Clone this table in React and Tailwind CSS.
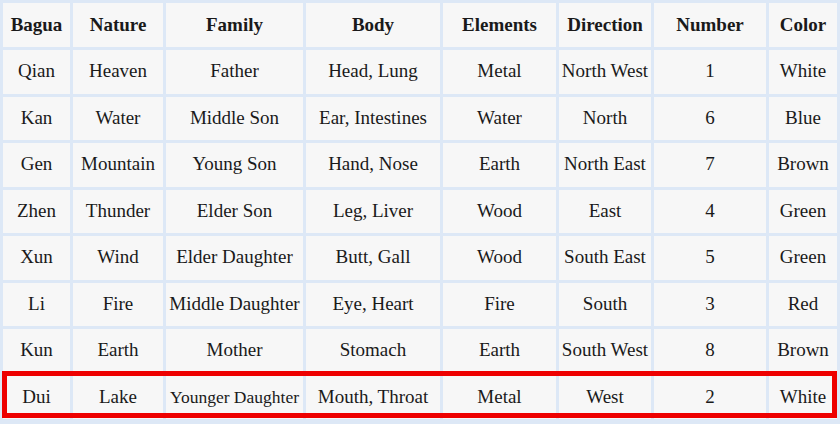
const headers = ["Bagua", "Nature", "Family", "Body", "Elements", "Direction", "Number", "Color"];

const rows = [
  ["Qian", "Heaven", "Father", "Head, Lung", "Metal", "North West", "1", "White"],
  ["Kan", "Water", "Middle Son", "Ear, Intestines", "Water", "North", "6", "Blue"],
  ["Gen", "Mountain", "Young Son", "Hand, Nose", "Earth", "North East", "7", "Brown"],
  ["Zhen", "Thunder", "Elder Son", "Leg, Liver", "Wood", "East", "4", "Green"],
  ["Xun", "Wind", "Elder Daughter", "Butt, Gall", "Wood", "South East", "5", "Green"],
  ["Li", "Fire", "Middle Daughter", "Eye, Heart", "Fire", "South", "3", "Red"],
  ["Kun", "Earth", "Mother", "Stomach", "Earth", "South West", "8", "Brown"],
  ["Dui", "Lake", "Younger Daughter", "Mouth, Throat", "Metal", "West", "2", "White"],
];

export default function App() {
  return (
    <div className="relative w-[840px] h-[424px] bg-[#dde8f6] font-['Liberation_Serif',serif] text-[#1a1a1a]">
      <div className="grid grid-cols-[67px_90px_137px_134px_113px_92px_112px_68px] grid-rows-[44px_repeat(8,43.5px)] gap-[3px] p-[3px]">
        {headers.map((h) => (
          <div key={h} className="flex items-center justify-center bg-[#f7f7f7] text-[19px] font-bold">
            {h}
          </div>
        ))}
        {rows.map((r) =>
          r.map((c, i) => (
            <div
              key={r[0] + i}
              className={`flex items-center justify-center bg-[#f7f7f7] whitespace-nowrap pb-[1px] ${
                c === "Younger Daughter" ? "text-[17.5px]" : "text-[19px]"
              }`}
            >
              {c}
            </div>
          ))
        )}
      </div>
      <div className="absolute left-[2px] top-[371px] w-[835px] h-[47px] border-[5px] border-[#ee0000]" />
    </div>
  );
}
